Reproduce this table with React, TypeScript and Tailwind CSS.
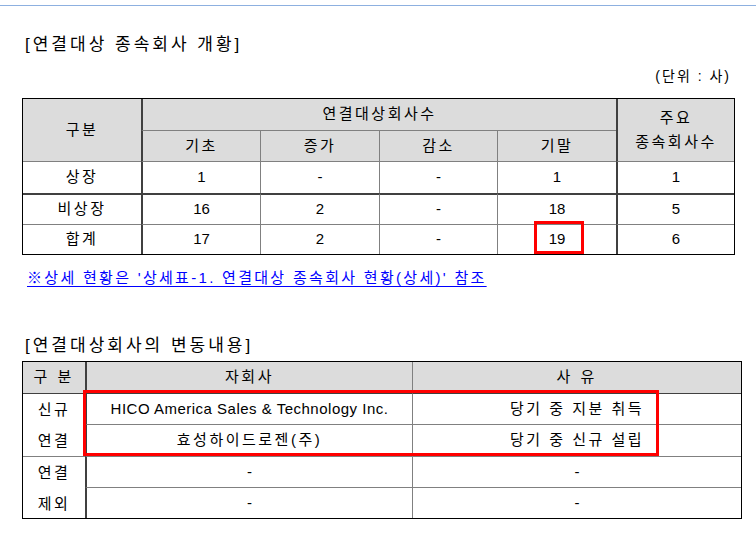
import React from "react";

const H = "bg-[#dcdcdc]";
const C = "flex items-center justify-center";
const N = "flex items-center justify-center tracking-normal";
const DL = "border-l-2 border-l-[#404040]";
const GL = "border-l border-l-[#808080]";
const GT = "border-t border-t-[#808080]";
const DT = "border-t-2 border-t-[#404040]";

export default function App() {
  return (
    <div className="w-[756px] h-[533px] bg-white text-black font-['Liberation_Sans','Noto_Sans_CJK_KR',sans-serif] overflow-hidden">
      <div className="h-[5px]" />
      <div className="h-px bg-[#8db0e0]" />
      <div className="h-[28px]" />
      <div className="h-[22px] pl-[25px] flex items-center text-[17px] tracking-[3px]">[연결대상 종속회사 개황]</div>
      <div className="h-[10px]" />
      <div className="h-[20px] pr-[25px] flex items-center justify-end text-[14px] tracking-[2px]">(단위 : 사)</div>
      <div className="h-[12px]" />
      <div className="relative ml-[22px] w-[713px] border border-black grid grid-cols-[118px_119px_119px_118px_119px_118px] grid-rows-[31px_31px_32px_31px_30px] text-[15px] tracking-[2.5px]">
        <div className={`row-span-2 ${H} ${C}`}>구분</div>
        <div className={`col-span-4 ${H} ${C} ${DL}`}>연결대상회사수</div>
        <div className={`row-span-2 ${H} ${DL} flex flex-col items-center justify-center leading-[24px]`}>
          <span>주요</span>
          <span>종속회사수</span>
        </div>
        <div className={`${H} ${C} ${DL} ${GT}`}>기초</div>
        <div className={`${H} ${C} ${GL} ${GT}`}>증가</div>
        <div className={`${H} ${C} ${GL} ${GT}`}>감소</div>
        <div className={`${H} ${C} ${GL} ${GT}`}>기말</div>

        <div className={`${C} ${GT}`}>상장</div>
        <div className={`${N} ${GT} ${DL}`}>1</div>
        <div className={`${N} ${GT} ${GL}`}>-</div>
        <div className={`${N} ${GT} ${GL}`}>-</div>
        <div className={`${N} ${GT} ${GL}`}>1</div>
        <div className={`${N} ${GT} ${DL}`}>1</div>

        <div className={`${C} ${DT}`}>비상장</div>
        <div className={`${N} ${DT} ${DL}`}>16</div>
        <div className={`${N} ${DT} ${GL}`}>2</div>
        <div className={`${N} ${DT} ${GL}`}>-</div>
        <div className={`${N} ${DT} ${GL}`}>18</div>
        <div className={`${N} ${DT} ${DL}`}>5</div>

        <div className={`${C} ${GT}`}>합계</div>
        <div className={`${N} ${GT} ${DL}`}>17</div>
        <div className={`${N} ${GT} ${GL}`}>2</div>
        <div className={`${N} ${GT} ${GL}`}>-</div>
        <div className={`${N} ${GT} ${GL}`}>19</div>
        <div className={`${N} ${GT} ${DL}`}>6</div>

        <div className="absolute left-[511px] top-[122px] w-[50px] h-[33px] border-[3px] border-[#ff0000]" />
      </div>
      <div className="h-[13px]" />
      <div className="h-[20px] pl-[27px] flex items-center text-[15px] tracking-[2.3px]">
        <span className="text-[#0000ff] underline underline-offset-[3px]">※상세 현황은 '상세표-1. 연결대상 종속회사 현황(상세)' 참조</span>
      </div>
      <div className="h-[47px]" />
      <div className="h-[22px] pl-[25px] flex items-center text-[17px] tracking-[3px]">[연결대상회사의 변동내용]</div>
      <div className="h-[4px]" />
      <div className="relative ml-[22px] w-[720px] border border-black grid grid-cols-[62px_327px_329px] grid-rows-[31px_31px_32px_31px_31px] text-[15px]">
        <div className={`${H} ${C} tracking-[3px]`}>구 분</div>
        <div className={`${H} ${C} ${DL} tracking-[2.5px]`}>자회사</div>
        <div className={`${H} ${C} ${GL} tracking-[3px]`}>사 유</div>

        <div className={`row-span-2 border-t border-t-[#404040] flex flex-col items-center justify-center leading-[31px] tracking-[2.5px]`}>
          <span>신규</span>
          <span>연결</span>
        </div>
        <div className={`${C} ${DL} border-t border-t-[#404040] tracking-[0.5px]`}>HICO America Sales &amp; Technology Inc.</div>
        <div className={`${C} ${GL} border-t border-t-[#404040] tracking-[2.5px]`}>당기 중 지분 취득</div>
        <div className={`${C} ${DL} ${GT} tracking-[2.5px]`}>효성하이드로젠(주)</div>
        <div className={`${C} ${GL} ${GT} tracking-[2.5px]`}>당기 중 신규 설립</div>

        <div className={`row-span-2 ${GT} flex flex-col items-center justify-center leading-[31px] tracking-[2.5px]`}>
          <span>연결</span>
          <span>제외</span>
        </div>
        <div className={`${N} ${DL} ${GT}`}>-</div>
        <div className={`${N} ${GL} ${GT}`}>-</div>
        <div className={`${N} ${DL} ${GT}`}>-</div>
        <div className={`${N} ${GL} ${GT}`}>-</div>

        <div className="absolute left-[60px] top-[28px] w-[576px] h-[66px] border-[3px] border-[#ff0000]" />
      </div>
    </div>
  );
}
